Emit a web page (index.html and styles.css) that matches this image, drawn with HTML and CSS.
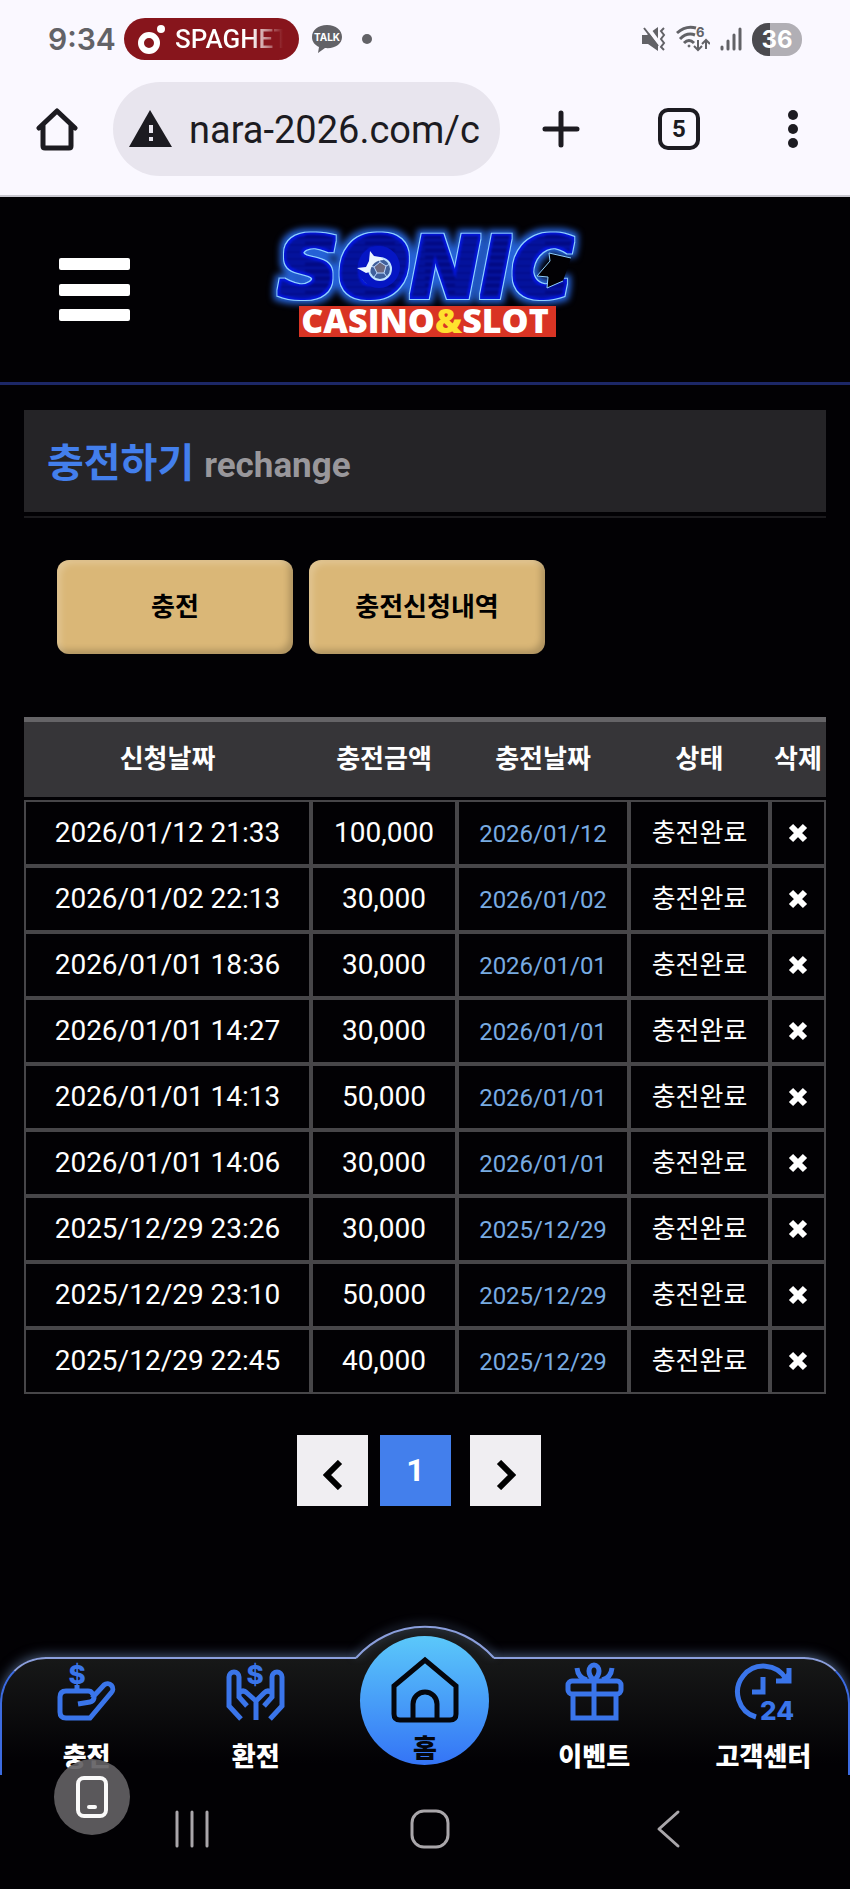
FILE: index.html
```html
<!DOCTYPE html>
<html lang="ko">
  <head>
    <meta charset="UTF-8">
    <meta name="viewport" content="width=device-width, initial-scale=1.0">
    <link rel="stylesheet" href="styles.css">
    <title>충전하기</title>
  </head>
  <body>
    <div class="browser">
      <div class="status">
        <span class="clock">9:34</span>
        <span class="music">
          <svg width="28" height="32" viewBox="0 0 28 32"><circle cx="11" cy="20" r="8" fill="none" stroke="#fff" stroke-width="6"/><circle cx="23" cy="6" r="4" fill="#fff"/></svg>
          <span class="song">SPAGHET</span>
        </span>
        <svg class="talk" width="30" height="28" viewBox="0 0 30 28">
          <path d="M15 0C6 0 0 5 0 12c0 5 3 8 7 10l-1 6 7-5c10 1 17-4 17-11C30 5 24 0 15 0z" fill="#626267"/>
          <text x="15" y="16" text-anchor="middle">TALK</text>
        </svg>
        <span class="dot"></span>
        <div class="signals">
          <svg width="24" height="26" viewBox="0 0 24 26">
            <path d="M0 9h5l11-8v24L6 18H0z" fill="#626267"/>
            <path d="M3 -2l16 22" stroke="#faf8ff" stroke-width="4"/>
            <path d="M2 2l14 18M22 2l-3 3 3 4-3 4 3 4-3 4 3 3" fill="none" stroke="#626267" stroke-width="2"/>
          </svg>
          <svg width="34" height="28" viewBox="0 0 34 28" fill="none" stroke="#626267" stroke-width="3">
            <path d="M1 8Q10 0 20 3M4 14q7-7 15-4M8 18q5-5 10 0"/>
            <circle cx="13" cy="21" r="1" fill="#626267" stroke-width="1"/>
            <path d="M22 15v9m-4-3l4 4 4-4M30 24v-9m-4 4l4-4 4 4" stroke-width="2"/>
            <text class="six" x="20" y="12">6</text>
          </svg>
          <svg width="22" height="24" viewBox="0 0 22 24" stroke="#626267" stroke-width="3" stroke-linecap="round"><path d="M2 20v2M8 14v8M14 8v14M20 2v20"/></svg>
          <span class="battery">36</span>
        </div>
      </div>
      <div class="toolbar">
        <button aria-label="Home">
          <svg width="42" height="44" viewBox="0 0 42 44" fill="none" stroke="#1c1b21" stroke-width="5" stroke-linecap="round" stroke-linejoin="round"><path d="M3 21L21 4l18 17M7 18v21q0 2 2 2h24q2 0 2-2V18"/></svg>
        </button>
        <label class="address">
          <svg width="43" height="38" viewBox="0 0 43 38"><path d="M21 0l22 37H0z" fill="#1c1b21"/><path d="M22 15v8m0 4v4" stroke="#e8e5ee" stroke-width="4"/></svg>
          <input type="text" value="nara-2026.com/c" aria-label="Address">
        </label>
        <button aria-label="New tab">
          <svg width="38" height="38" viewBox="0 0 38 38" stroke="#1c1b21" stroke-width="5" stroke-linecap="round"><path d="M19 3v32M3 19h32"/></svg>
        </button>
        <button aria-label="Tabs"><span class="tabs">5</span></button>
        <button aria-label="More">
          <svg width="10" height="38" viewBox="0 0 10 38" fill="#1c1b21"><circle cx="5" cy="5" r="5"/><circle cx="5" cy="19" r="5"/><circle cx="5" cy="33" r="5"/></svg>
        </button>
      </div>
    </div>

    <header class="header">
      <button class="menu" aria-label="Menu"><span></span><span></span><span></span></button>
      <a href="#" class="logo">
        <svg width="340" height="140" viewBox="0 0 340 140">
          <defs>
            <pattern id="scan" width="60" height="7" patternUnits="userSpaceOnUse">
              <rect width="60" height="7" fill="#020a86"/>
              <path d="M0 2h60M20 5h30" stroke="#0722c8"/>
            </pattern>
            <!-- fat letters, thin light rim, wide blue glow -->
            <filter id="neon" x="-10%" y="-30%" width="120%" height="160%" color-interpolation-filters="sRGB">
              <feMorphology in="SourceAlpha" operator="dilate" radius="2" result="fat"/>
              <feMorphology in="SourceAlpha" operator="dilate" radius="3" result="wide"/>
              <feMorphology in="SourceAlpha" operator="dilate" radius="6" result="halo"/>
              <feGaussianBlur in="halo" stdDeviation="3" result="haze"/>
              <feFlood flood-color="#2562d8"/>
              <feComposite in2="haze" operator="in" result="glow"/>
              <feFlood flood-color="#8fd0ff"/>
              <feComposite in2="wide" operator="in" result="rim"/>
              <feFlood flood-color="#0416dc"/>
              <feComposite in2="fat" operator="in" result="face"/>
              <feGaussianBlur in="SourceGraphic" stdDeviation="1" result="core"/>
              <feMerge>
                <feMergeNode in="glow"/>
                <feMergeNode in="rim"/>
                <feMergeNode in="face"/>
                <feMergeNode in="core"/>
              </feMerge>
            </filter>
          </defs>
          <text class="sonic" x="23" y="87" filter="url(#neon)">SONIC</text>
          <ellipse cx="124" cy="57" rx="21" ry="21" fill="#0516c4"/>
          <circle cx="125" cy="59" r="11" fill="#3f5f9c" stroke="#bfe2ff" stroke-width="2"/>
          <path d="M125 52l6 4-2 7h-7l-3-6zM125 52l-1-4M131 56l4-2M129 63l3 4M122 63l-3 4M119 57l-4-1" fill="#6d6a80" stroke="#bcd8ff"/>
          <path d="M102 58l9-1 3-6 1-10 4 5 6 1 4 3q-12 0-14 12l-4 1z" fill="#eaf6ff"/>
          <path d="M316 48l-22-5 1 8-13 15 11 1-1 11 16-7" fill="#020104" stroke="#8fd0ff"/>
          <rect x="44" y="96" width="257" height="31" fill="#d93424"/>
          <text class="casino" x="170" y="123" text-anchor="middle">CASINO<tspan fill="#ffe12e">&amp;</tspan>SLOT</text>
        </svg>
      </a>
    </header>

    <main class="content">
      <div class="title">
        <h1>충전하기 <small>rechange</small></h1>
      </div>
      <div class="buttons">
        <button>충전</button>
        <button>충전신청내역</button>
      </div>
      <table class="history">
        <colgroup>
          <col>
          <col class="amount">
          <col class="day">
          <col class="state">
          <col class="remove">
        </colgroup>
        <thead>
          <tr><th>신청날짜</th><th>충전금액</th><th>충전날짜</th><th>상태</th><th>삭제</th></tr>
        </thead>
        <tbody>
          <tr><td>2026/01/12 21:33</td><td>100,000</td><td class="date">2026/01/12</td><td class="done">충전완료</td><td><button aria-label="삭제"><svg width="20" height="20"><use href="#x"/></svg></button></td></tr>
          <tr><td>2026/01/02 22:13</td><td>30,000</td><td class="date">2026/01/02</td><td class="done">충전완료</td><td><button aria-label="삭제"><svg width="20" height="20"><use href="#x"/></svg></button></td></tr>
          <tr><td>2026/01/01 18:36</td><td>30,000</td><td class="date">2026/01/01</td><td class="done">충전완료</td><td><button aria-label="삭제"><svg width="20" height="20"><use href="#x"/></svg></button></td></tr>
          <tr><td>2026/01/01 14:27</td><td>30,000</td><td class="date">2026/01/01</td><td class="done">충전완료</td><td><button aria-label="삭제"><svg width="20" height="20"><use href="#x"/></svg></button></td></tr>
          <tr><td>2026/01/01 14:13</td><td>50,000</td><td class="date">2026/01/01</td><td class="done">충전완료</td><td><button aria-label="삭제"><svg width="20" height="20"><use href="#x"/></svg></button></td></tr>
          <tr><td>2026/01/01 14:06</td><td>30,000</td><td class="date">2026/01/01</td><td class="done">충전완료</td><td><button aria-label="삭제"><svg width="20" height="20"><use href="#x"/></svg></button></td></tr>
          <tr><td>2025/12/29 23:26</td><td>30,000</td><td class="date">2025/12/29</td><td class="done">충전완료</td><td><button aria-label="삭제"><svg width="20" height="20"><use href="#x"/></svg></button></td></tr>
          <tr><td>2025/12/29 23:10</td><td>50,000</td><td class="date">2025/12/29</td><td class="done">충전완료</td><td><button aria-label="삭제"><svg width="20" height="20"><use href="#x"/></svg></button></td></tr>
          <tr><td>2025/12/29 22:45</td><td>40,000</td><td class="date">2025/12/29</td><td class="done">충전완료</td><td><button aria-label="삭제"><svg width="20" height="20"><use href="#x"/></svg></button></td></tr>
        </tbody>
      </table>
      <div class="pages">
        <a href="#" aria-label="이전"><svg width="20" height="30" viewBox="0 0 20 30"><path d="M17 2L4 15l13 13" fill="none" stroke="#000" stroke-width="6"/></svg></a>
        <a href="#" class="current">1</a>
        <a href="#" class="next" aria-label="다음"><svg width="20" height="30" viewBox="0 0 20 30"><path d="M3 2l13 13L3 28" fill="none" stroke="#000" stroke-width="6"/></svg></a>
      </div>
    </main>

    <nav class="bottom">
      <svg class="bump" width="160" height="60" viewBox="0 0 160 60">
        <defs><linearGradient id="dark" x1="0" y1="0" x2="0" y2="1"><stop offset="0" stop-color="#1c2024"/><stop offset="1" stop-color="#171818"/></linearGradient></defs>
        <path d="M11 53A92 92 0 0 1 149 53V56H11z" fill="url(#dark)"/>
        <path class="edge" d="M11 53A92 92 0 0 1 149 53" fill="none" stroke="#8b9fdc" stroke-width="2"/>
      </svg>
      <a href="#">
        <svg width="57" height="57" viewBox="0 0 57 57">
          <path d="M19 22v6M20 41l12-2a5 5 0 0 0 2-9q-1-2-4-2H8q-6 0-6 6v15q0 6 6 6h24l21-25a5 5 0 0 0-7-8L34 35"/>
          <text x="19" y="21" text-anchor="middle">$</text>
        </svg>
        충전
      </a>
      <a href="#">
        <svg width="57" height="57" viewBox="0 0 57 57">
          <path d="M14 56L2 43V14a5 5 0 0 1 10 0v20l8 9M12 30q4-4 8 0l9 8V57M43 56l12-13V14a5 5 0 0 0-10 0v20l-8 9M45 30q-4-4-8 0l-8 8"/>
          <text x="28" y="21" text-anchor="middle">$</text>
        </svg>
        환전
      </a>
      <a href="#" class="home">
        <svg width="68" height="68" viewBox="0 0 68 68"><path d="M3 30L34 4l31 26v28q0 6-6 6H9q-6 0-6-6zM22 64V48a12 12 0 0 1 24 0v16"/></svg>
        홈
      </a>
      <a href="#">
        <svg width="57" height="57" viewBox="0 0 57 57">
          <rect x="2" y="18" width="53" height="13" rx="4"/>
          <path d="M7 31v24h43V31M28 18v37M28 17q-5-4-5-9a5 6 0 0 1 10 0q0 5-5 9zM11 5q1 10 10 12M46 5q-1 10-10 12"/>
        </svg>
        이벤트
      </a>
      <a href="#">
        <svg width="57" height="57" viewBox="0 0 57 57">
          <path d="M21 54A26 26 0 1 1 51 16M54 5v13H41M28 14v15H17"/>
          <path class="tip" d="M54 8v10H44z"/>
          <text x="42" y="57" text-anchor="middle">24</text>
        </svg>
        고객센터
      </a>
    </nav>
    <div class="keys">
      <button aria-label="Recents"><svg width="36" height="38" viewBox="0 0 36 38"><path d="M3 2v34M18 2v34M33 2v34"/></svg></button>
      <button aria-label="Home"><svg width="40" height="40" viewBox="0 0 40 40"><rect x="2" y="2" width="36" height="36" rx="12"/></svg></button>
      <button aria-label="Back"><svg width="26" height="40" viewBox="0 0 26 40"><path d="M23 3L4 20l19 17"/></svg></button>
      <button class="float" aria-label="화면">
        <svg width="32" height="42" viewBox="0 0 32 42"><rect x="2" y="2" width="28" height="38" rx="6"/><path d="M13 31h6"/></svg>
      </button>
    </div>

    <!-- shared delete icon -->
    <svg class="defs" width="0" height="0"><symbol id="x" viewBox="0 0 20 20"><path d="M3 3l14 14M17 3L3 17" stroke="#fff" stroke-width="6"/></symbol></svg>
  </body>
</html>
```
FILE: styles.css
```css
:root {
--blue: #437fec;
--line: #474649;
--ink: #1c1b21;
--gray: #626267;
}
* {
margin: 0;
padding: 0;
box-sizing: border-box;
}
body {
min-height: 100vh;
display: flex;
flex-direction: column;
background-color: #020104;
color: #fff;
font-family: Roboto, "Noto Sans CJK KR", sans-serif;
}
button {
border: none;
background: none;
font-family: inherit;
cursor: pointer;
}
a {
color: inherit;
text-decoration: none;
}
svg {
display: block;
}
.defs {
position: absolute;
}

/* phone status + browser bar */
.browser {
background-color: #faf8ff;
padding-bottom: 15px;
border-bottom: 2px solid #c9c8d0;
}
.status {
height: 78px;
padding: 0 48px;
display: flex;
align-items: center;
color: var(--gray);
}
.clock {
width: 76px;
font: 600 30px Inter, sans-serif;
}
.music {
width: 175px;
height: 42px;
padding-left: 14px;
border-radius: 21px;
background-color: #87151c;
display: flex;
align-items: center;
gap: 9px;
}
.song {
font-size: 26px;
font-weight: 500;
color: transparent;
background: linear-gradient(to right, #fff 76px, #87151c 108px);
background-clip: text;
-webkit-background-clip: text;
}
.talk {
margin: 0 20px 0 13px;
}
.talk text {
font: 700 10px Inter, sans-serif;
fill: #fff;
}
.dot {
width: 10px;
height: 10px;
border-radius: 50%;
background-color: var(--gray);
}
.signals {
margin-left: auto;
display: flex;
align-items: center;
gap: 10px;
}
.six {
font: 700 13px Inter, sans-serif;
fill: var(--gray);
stroke: none;
}
.battery {
width: 50px;
height: 33px;
border-radius: 16px;
background: linear-gradient(to right, #4b4a4f 36%, #b1afb5 36%);
color: #fff;
font: 700 24px/33px Inter, sans-serif;
text-align: center;
}
.toolbar {
height: 102px;
display: grid;
grid-template-columns: 113px minmax(0, 1fr) 122px 114px 114px;
align-items: center;
justify-items: center;
}
.address {
width: 100%;
height: 94px;
padding: 0 16px;
border-radius: 47px;
background-color: #e8e5ee;
display: flex;
align-items: center;
gap: 17px;
}
.address svg {
flex: none;
}
.address input {
flex: 1;
min-width: 0;
padding-top: 2px;
border: none;
background: none;
color: var(--ink);
font: 38px Roboto, sans-serif;
}
.tabs {
width: 42px;
height: 42px;
border: 4px solid var(--ink);
border-radius: 10px;
display: block;
color: var(--ink);
font: 700 24px/34px Roboto, sans-serif;
}

/* site header */
.header {
height: 188px;
border-bottom: 3px solid #1c2767;
display: grid;
grid-template-columns: 1fr 340px 1fr;
align-items: center;
}
.menu {
width: 71px;
height: 63px;
margin-left: 59px;
display: flex;
flex-direction: column;
justify-content: space-between;
}
.menu span {
height: 12px;
border-radius: 2px;
background-color: #fff;
}
.logo {
margin-bottom: 20px;
}
.sonic {
font: italic 700 84px "DejaVu Sans", sans-serif;
fill: url(#scan);
}
.casino {
font: 800 34px "Open Sans", sans-serif;
fill: #fff;
}

/* content */
.content {
flex: 1;
padding: 25px 24px 0;
}
.title {
padding-bottom: 4px;
border-bottom: 2px solid #1b1a1d;
}
.title h1 {
height: 102px;
padding: 6px 23px 0;
background-color: #252427;
color: var(--blue);
font-size: 40px;
line-height: 96px;
}
.title small {
color: #99979b;
font-size: 35px;
}
.buttons {
padding: 42px 33px 63px;
display: flex;
gap: 16px;
}
.buttons button {
width: 236px;
height: 94px;
padding-bottom: 6px;
border-radius: 12px;
background-color: #dab777;
box-shadow: inset 4px 4px 6px rgba(255, 255, 255, 0.2), inset -4px -4px 6px rgba(0, 0, 0, 0.2);
color: #000;
font-size: 26px;
font-weight: 700;
}
.history {
width: 100%;
table-layout: fixed;
border-spacing: 0;
text-align: center;
}
.amount {
width: 146px;
}
.day {
width: 172px;
}
.state {
width: 141px;
}
.remove {
width: 56px;
}
.history th {
height: 83px;
border-top: 5px solid #656467;
border-bottom: 3px solid #020104;
background-color: #363538;
font-size: 26px;
line-height: 75px;
}
.history td {
height: 66px;
border: 2px solid var(--line);
font-size: 28px;
line-height: 62px;
}
.history .date {
padding-top: 2px;
color: #78abe2;
font-size: 24px;
line-height: 60px;
}
.history .done {
font-size: 26px;
}
.history button {
display: block;
margin: 0 auto;
}
.pages {
padding: 41px 12px 110px 0;
display: flex;
justify-content: center;
gap: 12px;
}
.pages a {
width: 71px;
height: 71px;
padding-top: 8px;
background-color: #f0eef2;
display: flex;
align-items: center;
justify-content: center;
}
.pages .current {
padding: 0 0 2px;
background-color: var(--blue);
font-size: 32px;
font-weight: 700;
}
.pages .next {
margin-left: 7px;
}

/* bottom menu */
.bottom {
position: relative;
height: 118px;
border: 2px solid #3c6be0;
border-top-color: #8b9fdc;
border-bottom: none;
border-radius: 46px 46px 0 0;
background: linear-gradient(#171818, #020104 90%);
box-shadow: 0 -2px 12px rgba(130, 165, 215, 0.5);
display: grid;
grid-template-columns: repeat(5, 1fr);
justify-items: center;
align-items: start;
}
.bump {
position: absolute;
left: 50%;
top: -54px;
margin-left: -80px;
}
.edge {
filter: drop-shadow(0 -2px 5px rgba(130, 165, 215, 0.6));
}
.bottom a {
padding-top: 4px;
display: flex;
flex-direction: column;
align-items: center;
gap: 19px;
font-size: 26px;
font-weight: 900;
line-height: 36px;
}
.bottom a svg {
fill: none;
stroke: #3a75ea;
stroke-width: 5px;
overflow: visible;
}
.bottom a text {
font: 800 26px Inter, sans-serif;
fill: #3a75ea;
stroke: none;
}
.bottom .tip {
fill: #3a75ea;
stroke: none;
}
.bottom .home {
position: relative;
width: 129px;
height: 129px;
margin-top: -23px;
padding-top: 20px;
border-radius: 50%;
background: linear-gradient(#5bc8fa, #3474f6);
color: #04060c;
gap: 7px;
}
.bottom .home svg {
stroke: #04060c;
}

/* phone keys */
.keys {
position: relative;
height: 114px;
padding: 0 63px 6px 73px;
display: grid;
grid-template-columns: repeat(3, 1fr);
justify-items: center;
align-items: center;
}
.keys::before {
content: "";
position: absolute;
inset: 0;
background-color: #020104;
}
.keys button {
position: relative;
}
.keys svg {
fill: none;
stroke: #a9a6aa;
stroke-width: 3px;
stroke-linecap: round;
stroke-linejoin: round;
}
.keys .float {
position: absolute;
left: 54px;
top: -16px;
width: 76px;
height: 76px;
border-radius: 50%;
background-color: rgba(98, 96, 99, 0.92);
display: flex;
align-items: center;
justify-content: center;
}
.keys .float svg {
stroke: #fafafa;
stroke-width: 4px;
}
```
